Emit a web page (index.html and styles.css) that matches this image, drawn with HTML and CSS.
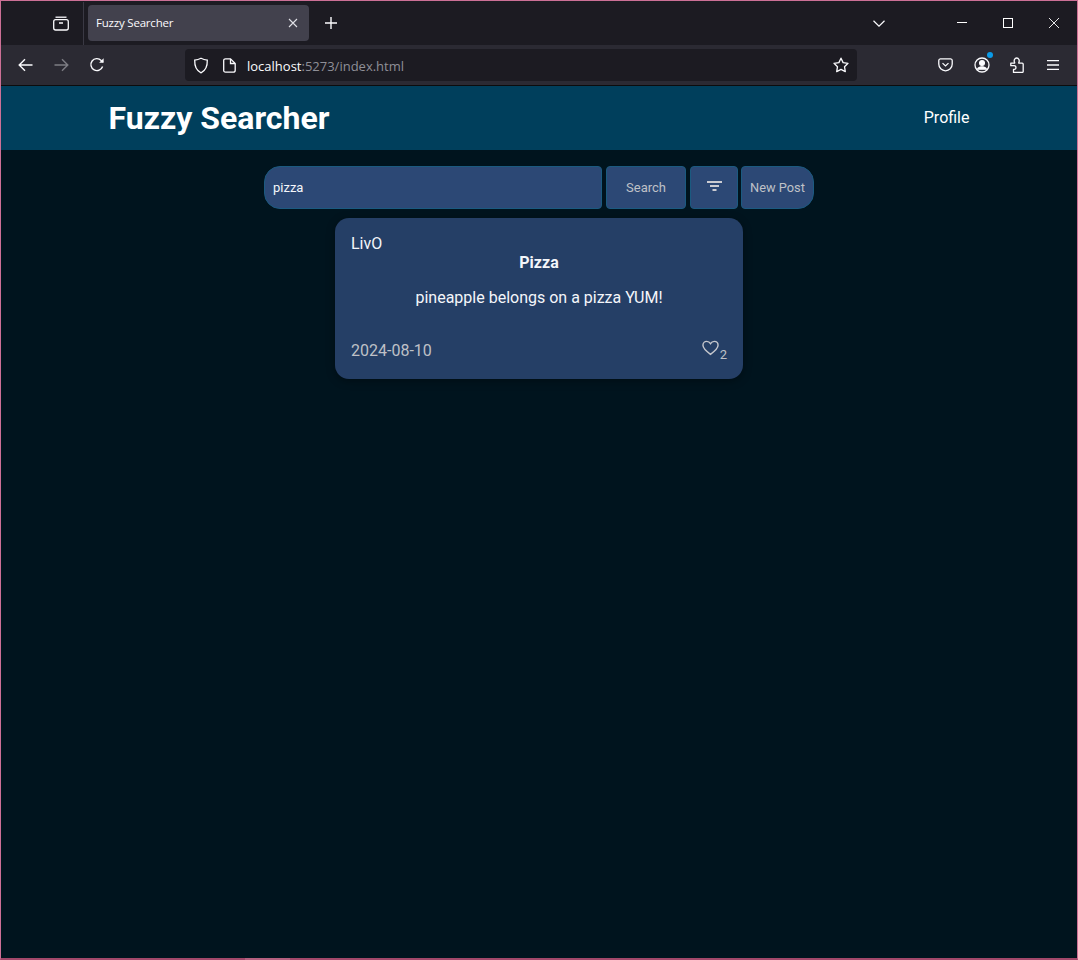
FILE: index.html
```html
<!DOCTYPE html>
<html lang="en">
<head>
<meta charset="utf-8">
<title>Fuzzy Searcher</title>
<link rel="stylesheet" href="styles.css">
</head>
<body>
<div class="window">
  <div class="tabbar">
    <div class="tabbar-left">
      <svg class="ico" width="18" height="18" viewBox="0 0 18 18" fill="none" stroke="#fbfbfe" stroke-width="1.3"><path d="M3.5 3.2h11"/><rect x="1.7" y="5.7" width="14.6" height="10.3" rx="2"/><path d="M7 9h4" stroke-width="1.5"/></svg>
    </div>
    <div class="tab">
      <span class="tab-title">Fuzzy Searcher</span>
      <svg width="10" height="10" viewBox="0 0 10 10" stroke="#e0e0e6" stroke-width="1.1"><path d="M1 1l8 8M9 1l-8 8"/></svg>
    </div>
    <svg class="newtab" width="14" height="14" viewBox="0 0 14 14" stroke="#fbfbfe" stroke-width="1.4"><path d="M7 1v12M1 7h12"/></svg>
    <div class="tabbar-right">
      <svg class="chev" width="12" height="7" viewBox="0 0 12 7" fill="none" stroke="#fbfbfe" stroke-width="1.2"><path d="M.5 .8L6 6.200 11.500 .8"/></svg>
      <div class="winbtns">
        <svg width="10" height="10" viewBox="0 0 10 10" stroke="#fff"><path d="M0 4.500h10"/></svg>
        <svg width="10" height="10" viewBox="0 0 10 10" fill="none" stroke="#fff"><rect x=".5" y=".5" width="9" height="9"/></svg>
        <svg width="10" height="10" viewBox="0 0 10 10" stroke="#fff" stroke-width=".9"><path d="M0 0l10 10M10 0L0 10"/></svg>
      </div>
    </div>
  </div>
  <div class="toolbar">
    <div class="nav">
      <svg width="15" height="14" viewBox="0 0 15 14" fill="none" stroke="#fbfbfe" stroke-width="1.4"><path d="M14.500 7H1.500M7 1.200L1.200 7 7 12.800"/></svg>
      <svg width="15" height="14" viewBox="0 0 15 14" fill="none" stroke="#7d7d84" stroke-width="1.4"><path d="M.5 7h13M8 1.200L13.800 7 8 12.800"/></svg>
      <svg width="16" height="16" viewBox="0 0 16 16" fill="none" stroke="#fbfbfe" stroke-width="1.4"><path d="M13.600 9.500A6 6 0 1 1 12.200 3.400L14 5"/><path d="M14.600 1.200v4.500h-4.500z" fill="#fbfbfe" stroke="none"/></svg>
    </div>
    <div class="urlbar">
      <svg width="16" height="17" viewBox="0 0 16 17" fill="none" stroke="#fbfbfe" stroke-width="1.3"><path d="M8 1.200c2 1.100 4 1.700 6.300 1.900.2 6-1.600 10.600-6.300 12.700C3.300 13.700 1.500 9.100 1.700 3.100 4 2.900 6 2.300 8 1.200z"/></svg>
      <svg class="pageico" width="13" height="15" viewBox="0 0 13 15" fill="none" stroke="#fbfbfe" stroke-width="1.3"><path d="M2.500 .8h5l4.700 4.700v6.700a2 2 0 0 1-2 2H2.500a1.800 1.800 0 0 1-1.800-2V2.600A1.800 1.800 0 0 1 2.500 .8z"/><path d="M7.500 1v4.500h4.500"/></svg>
      <span class="url">localhost<span class="url-dim">:5273/index.html</span></span>
      <svg class="star" width="16" height="16" viewBox="0 0 16 16" fill="none" stroke="#fbfbfe" stroke-width="1.3"><path d="M8 1.200l2.100 4.400 4.900.7-3.500 3.400.8 4.900L8 12.400l-4.300 2.200.8-4.900L1 6.300l4.900-.7z" stroke-linejoin="round"/></svg>
    </div>
    <div class="tools">
      <svg width="15" height="14" viewBox="0 0 16 15" fill="none" stroke="#fbfbfe" stroke-width="1.4"><path d="M2.500 1h11A1.800 1.800 0 0 1 15.200 2.800V6.500a7.200 7.200 0 0 1-14.400 0V2.800A1.800 1.800 0 0 1 2.500 1z"/><path d="M4.800 5.500L8 8.500l3.200-3"/></svg>
      <span class="account">
        <svg width="16" height="16" viewBox="0 0 16 16" fill="none" stroke="#fbfbfe" stroke-width="1.3"><circle cx="8" cy="8" r="7"/><circle cx="8" cy="6" r="2.400" fill="#fbfbfe"/><path d="M3.500 12.200c.8-1.800 2.300-2.400 4.500-2.400s3.700.6 4.500 2.400z" fill="#fbfbfe"/></svg>
        <span class="dot"></span>
      </span>
      <svg width="14" height="16" viewBox="0 0 14 16" fill="none" stroke="#fbfbfe" stroke-width="1.3" stroke-linejoin="round"><path d="M.8 6.200h3.400c.5 0 .7-.5.4-.9C3.600 3.800 4.600 1 6.700 1s3.100 2.800 2.100 4.300c-.3.400-.1.900.4.900h3a1 1 0 0 1 1 1v7.200a1 1 0 0 1-1 1H3.500v-3h.8c2.200 0 2.200-3.700 0-3.700H.8z"/></svg>
      <svg width="12" height="10" viewBox="0 0 12 10" stroke="#fbfbfe" stroke-width="1.3"><path d="M0 .7h12M0 5h12M0 9.300h12"/></svg>
    </div>
  </div>
  <main class="page">
    <header class="site-header">
      <h1 class="brand">Fuzzy Searcher</h1>
      <a class="profile">Profile</a>
    </header>
    <div class="searchrow">
      <div class="field search-input">pizza</div>
      <button class="field btn btn-search">Search</button>
      <button class="field btn btn-filter">
        <svg class="filter-ico" width="15" height="10" viewBox="0 0 15 10" stroke="#cbccd2" stroke-width="1.8"><path d="M0 1h15M3 5h9M5.500 9h4"/></svg>
      </button>
      <button class="field btn btn-new">New Post</button>
    </div>
    <article class="card">
      <div class="author">LivO</div>
      <h2 class="title">Pizza</h2>
      <p class="body">pineapple belongs on a pizza YUM!</p>
      <div class="card-foot">
        <span class="date">2024-08-10</span>
        <span class="likes">
          <svg class="heart" width="17" height="16" viewBox="0 0 18 16" fill="none" stroke="#c4c6cc" stroke-width="1.5"><path d="M9 14.700C4 11 1 8.300 1 5.100 1 2.700 2.800 1 5 1c1.700 0 3.100.9 4 2.400C9.900 1.900 11.300 1 13 1c2.200 0 4 1.700 4 4.100 0 3.200-3 5.900-8 9.600z"/></svg>
          <span class="count">2</span>
        </span>
      </div>
    </article>
  </main>
  <div class="peek"></div>
</div>
</body>
</html>
```
FILE: styles.css
```css
* { box-sizing: border-box; }
html, body { margin: 0; padding: 0; height: 100%; }
body { background: #00141e; overflow: hidden; }
svg { display: block; flex: none; }

.window {
  position: relative;
  width: 1078px;
  height: 960px;
  display: flex;
  flex-direction: column;
  border: 1px solid #cc7096;
  border-bottom: 2px solid #a2486a;
}
.peek {
  position: absolute;
  left: 244px;
  bottom: -2px;
  width: 45px;
  height: 2px;
  background: #b4607f;
}

.tabbar {
  height: 44px;
  flex: none;
  background: #1c1b22;
  display: flex;
  align-items: center;
  font-family: "Open Sans", "Noto Sans", sans-serif;
}
.tabbar-left {
  width: 83px;
  height: 43px;
  flex: none;
  display: flex;
  align-items: center;
  justify-content: flex-end;
  padding-right: 13px;
  border-right: 1px solid #3a3944;
}
.tab {
  width: 221px;
  height: 36px;
  margin-left: 4px;
  margin-top: -1px;
  flex: none;
  background: #42414d;
  border-radius: 4px;
  display: flex;
  align-items: center;
  justify-content: space-between;
  padding: 0 11px 0 8px;
}
.tab-title { color: #fbfbfe; font-size: 11.5px; letter-spacing: -.2px; }
.newtab { margin-left: 15px; }
.tabbar-right {
  flex: 1;
  display: flex;
  align-items: center;
  justify-content: flex-end;
}
.chev { margin-right: 72px; }
.winbtns { display: flex; gap: 36px; margin-right: 18px; }

.toolbar {
  height: 41px;
  flex: none;
  background: #2b2a33;
  border-bottom: 1px solid #0c0c0d;
  display: flex;
  align-items: center;
}
.nav {
  width: 184px;
  flex: none;
  display: grid;
  grid-template-columns: repeat(3, 36px);
  justify-items: center;
  align-items: center;
  padding-left: 6px;
}
.urlbar {
  width: 672px;
  height: 32px;
  flex: none;
  background: #1c1b22;
  border-radius: 4px;
  display: flex;
  align-items: center;
  padding: 0 8px;
  font-family: "Open Sans", "Noto Sans", sans-serif;
}
.pageico { margin-left: 14px; }
.url { margin: 2px 0 0 11px; flex: 1; color: #fbfbfe; font-size: 13px; }
.url-dim { color: #8f8f97; }
.tools {
  flex: 1;
  display: grid;
  grid-template-columns: repeat(4, 36px);
  justify-items: center;
  align-items: center;
  padding-left: 70px;
}
.account { position: relative; display: block; margin-left: 1px; }
.dot {
  position: absolute;
  top: -5px;
  right: -3px;
  width: 6px;
  height: 6px;
  border-radius: 50%;
  background: #0a9be8;
}

.page {
  flex: 1;
  background: #00141e;
  font-family: Roboto, "Liberation Sans", sans-serif;
  color: #f4f6fa;
}
.site-header {
  height: 64px;
  background: #003f5c;
  display: flex;
  align-items: center;
  justify-content: space-between;
  padding: 0 107.5px 0 107.5px;
}
.brand {
  margin: 0;
  font-size: 32px;
  font-weight: 700;
  color: #fff;
}
.profile { font-size: 16px; color: #fff; margin-top: -2px; }

.searchrow {
  display: flex;
  justify-content: center;
  gap: 4px;
  margin: 16px 0 9px;
}
.field {
  height: 43px;
  background: #2c4875;
  border: 1px solid #1b5a80;
  border-radius: 4px;
  font-family: Roboto, "Liberation Sans", sans-serif;
  font-size: 13px;
  color: #bfc1c7;
}
.search-input {
  width: 338px;
  display: flex;
  align-items: center;
  padding-left: 8px;
  color: #f4f6fa;
  border-radius: 16px 4px 4px 16px;
}
.btn { padding: 0; margin: 0; display: flex; align-items: center; justify-content: center; }
.btn-search { width: 80px; }
.btn-filter { width: 48px; }
.filter-ico { margin-top: -3px; }
.btn-new { width: 73px; margin-left: -1px; border-radius: 4px 16px 16px 4px; font-size: 12.8px; }

.card {
  width: 408px;
  height: 161px;
  margin: 0 auto;
  background: #253f66;
  border-radius: 14px;
  padding: 16px;
  display: flex;
  flex-direction: column;
  box-shadow: 0 2px 8px rgba(0, 0, 0, .35);
}
.author { font-size: 16px; line-height: 19px; }
.title { margin: 0; text-align: center; font-size: 16px; font-weight: 700; line-height: 19px; }
.body { margin: 16px 0 0; text-align: center; font-size: 16px; line-height: 19px; }
.card-foot {
  margin-top: auto;
  margin-bottom: 2px;
  display: flex;
  justify-content: space-between;
  align-items: center;
  color: #bfc1c7;
}
.date { font-size: 16px; line-height: 19px; }
.likes { display: flex; align-items: flex-start; gap: 1px; }
.count { font-size: 13px; line-height: 13px; margin-top: 8px; }
```
